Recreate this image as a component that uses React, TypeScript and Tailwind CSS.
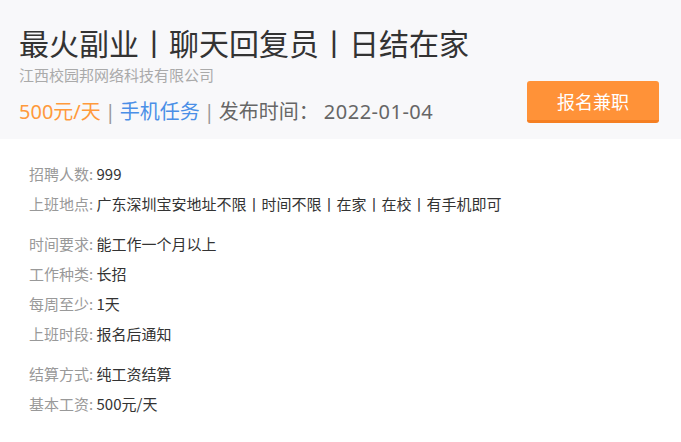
import React from 'react';

const groups: [string, string][][] = [
  [
    ['招聘人数', '999'],
    ['上班地点', '广东深圳宝安地址不限丨时间不限丨在家丨在校丨有手机即可'],
  ],
  [
    ['时间要求', '能工作一个月以上'],
    ['工作种类', '长招'],
    ['每周至少', '1天'],
    ['上班时段', '报名后通知'],
  ],
  [
    ['结算方式', '纯工资结算'],
    ['基本工资', '500元/天'],
  ],
];

export default function App() {
  return (
    <div className="w-[681px] h-[442px] bg-white overflow-hidden font-['Noto_Sans_CJK_SC',sans-serif]">
      <div className="h-[139px] bg-[#f8f8fa] flex justify-between pl-[19px] pr-[22px] pt-[22px]">
        <div>
          <h1 className="text-[30px] leading-[40px] text-[#333]">最火副业丨聊天回复员丨日结在家</h1>
          <div className="mt-[2px] text-[15px] leading-[22px] text-[#aaa]">江西校园邦网络科技有限公司</div>
          <div className="mt-[11px] text-[20px] leading-[30px] text-[#666] font-['Noto_Sans','Noto_Sans_CJK_SC',sans-serif]">
            <span className="text-[#ff9a3c]">500元/天</span>
            <span className="mx-[4px] text-[#999]">|</span>
            <span className="text-[#4a8fe7]">手机任务</span>
            <span className="mx-[4px] text-[#999]">|</span>
            <span>发布时间：</span>
            <span className="ml-[5px] tracking-[0.5px]">2022-01-04</span>
          </div>
        </div>
        <button className="mt-[59px] w-[132px] h-[42px] rounded-[3px] bg-[#ff9238] border-b-[3px] border-[#f57f22] text-white text-[18px] leading-[40px]">
          报名兼职
        </button>
      </div>
      <div className="pl-[29px] pt-[20px] flex flex-col gap-[10px]">
        {groups.map((g, i) => (
          <div key={i}>
            {g.map(([k, v]) => (
              <div key={k} className="h-[30px] leading-[30px] text-[15px]">
                <span className="text-[#999]">{k}: </span>
                <span className="text-[#333]">{v}</span>
              </div>
            ))}
          </div>
        ))}
      </div>
    </div>
  );
}
